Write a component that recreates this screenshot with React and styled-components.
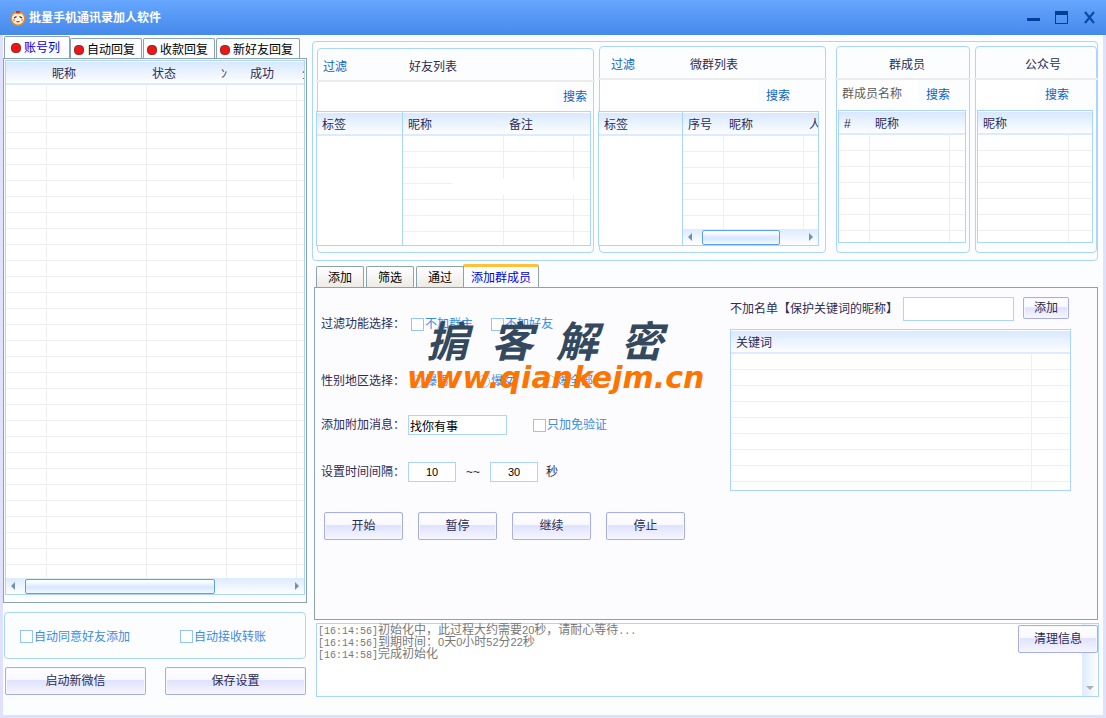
import React, { useState } from 'react';
import styled, { createGlobalStyle, css } from 'styled-components';

// Every grid in the app is drawn with the same table: header strip, 16px rows,
// and an optional fake scrollbar at the bottom.
function DataGrid({ columns, rows, bodyHeight, scroll, label }) {
  return (
    <GridBox>
      <GridClip $height={bodyHeight + 24}>
        <Table aria-label={label}>
          <colgroup>
            {columns.map((col, i) => (
              <col key={i} style={col.width ? { width: col.width } : undefined} />
            ))}
          </colgroup>
          <thead>
            <tr>
              {columns.map((col, i) => (
                <Th key={i} $align={col.align}>
                  {col.title}
                  {col.tail && <Tail>{col.tail}</Tail>}
                </Th>
              ))}
            </tr>
          </thead>
          <tbody>
            {Array.from({ length: rows }, (_, r) => (
              <tr key={r}>
                {columns.map((col, i) => (
                  <Td key={i} />
                ))}
              </tr>
            ))}
          </tbody>
        </Table>
      </GridClip>
      {scroll && (
        <ScrollTrack>
          <Arrow $dir="left" />
          <ScrollThumb $width={scroll} />
          <Arrow $dir="right" />
        </ScrollTrack>
      )}
    </GridBox>
  );
}

function Check({ type = 'checkbox', name, children }) {
  return (
    <CheckLabel>
      <CheckInput type={type} name={name} />
      {children}
    </CheckLabel>
  );
}

const accountColumns = [
  { title: '', width: 41 },
  { title: '昵称', width: 100 },
  { title: '状态', width: 80, tail: 'ﾝ' },
  { title: '成功', width: 70, align: 'center' },
  { title: '全' },
];

const accountTabs = ['账号列', '自动回复', '收款回复', '新好友回复'];
const taskTabs = ['添加', '筛选', '通过', '添加群成员'];
const taskButtons = ['开始', '暂停', '继续', '停止'];

function App() {
  const [accountTab, setAccountTab] = useState('账号列');
  const [taskTab, setTaskTab] = useState('添加群成员');

  return (
    <Window>
      <GlobalStyle />
      <TitleBar>
        <AppIcon viewBox="0 0 16 16" aria-hidden="true">
          <circle cx="8" cy="8.500" r="6.800" fill="#fff3df" stroke="#e88a1c" strokeWidth="1.500" />
          <path d="M4 3.500 Q8 -1.500 12 3.500 Q8 5 4 3.500Z" fill="#f39a1e" />
          <rect x="6" y="1" width="4" height="2" fill="#e0301c" />
          <path d="M4 8L6.500 6.500M12 8L9.500 6.500" stroke="#3b2a20" strokeWidth="1.200" />
          <circle cx="3.800" cy="10" r="1.200" fill="#f3a08c" />
          <circle cx="12.200" cy="10" r="1.200" fill="#f3a08c" />
          <path d="M6 11 Q8 14 10 11Z" fill="#e0301c" />
        </AppIcon>
        <h1>批量手机通讯录加人软件</h1>
        <WindowButtons>
          <button type="button" aria-label="最小化">
            <svg width="14" height="14"><rect x="0" y="7" width="13" height="3" fill="#003f98" /></svg>
          </button>
          <button type="button" aria-label="最大化">
            <svg width="14" height="14">
              <path d="M0 0H13V13H0Z M1 4V12H12V4Z" fillRule="evenodd" fill="#003f98" />
            </svg>
          </button>
          <button type="button" aria-label="关闭">
            <svg width="14" height="14">
              <path d="M2 1L11 12M11 1L2 12" stroke="#0b489f" strokeWidth="2" />
            </svg>
          </button>
        </WindowButtons>
      </TitleBar>

      <Body>
        <Sidebar>
          <AccountTabs role="tablist">
            {accountTabs.map((tab) => (
              <AccountTab
                key={tab}
                type="button"
                role="tab"
                aria-selected={tab === accountTab}
                $active={tab === accountTab}
                onClick={() => setAccountTab(tab)}
              >
                <RedDot />
                {tab}
              </AccountTab>
            ))}
          </AccountTabs>
          <AccountPanel>
            <DataGrid label="账号列" columns={accountColumns} rows={31} bodyHeight={493} scroll={190} />
          </AccountPanel>
          <AutoBox>
            <Check>自动同意好友添加</Check>
            <Check>自动接收转账</Check>
          </AutoBox>
          <SideButtons>
            <PushButton type="button">启动新微信</PushButton>
            <PushButton type="button">保存设置</PushButton>
          </SideButtons>
        </Sidebar>

        <Main>
          <Lists>
            <ListCard>
              <ListHead $pad={5}>
                <TextButton type="button">过滤</TextButton>
                <ListTitle $gap={62}>好友列表</ListTitle>
              </ListHead>
              <SearchRow $height={29} $right={6}>
                <input type="text" aria-label="搜索好友" />
                <TextButton type="button">搜索</TextButton>
              </SearchRow>
              <GridPair $left={87} $right={2}>
                <DataGrid label="好友标签" columns={[{ title: '标签' }]} rows={0} bodyHeight={109} />
                <DataGrid
                  label="好友列表"
                  columns={[{ title: '昵称', width: 101 }, { title: '备注', width: 70 }, { title: '' }]}
                  rows={7}
                  bodyHeight={109}
                />
                <BlankBand />
              </GridPair>
            </ListCard>

            <ListCard>
              <ListHead $pad={11}>
                <TextButton type="button">过滤</TextButton>
                <ListTitle $gap={55}>微群列表</ListTitle>
              </ListHead>
              <SearchRow $height={31} $right={35}>
                <input type="text" aria-label="搜索微群" />
                <TextButton type="button">搜索</TextButton>
              </SearchRow>
              <GridPair $left={85} $right={6}>
                <DataGrid label="微群标签" columns={[{ title: '标签' }]} rows={0} bodyHeight={109} />
                <DataGrid
                  label="微群列表"
                  columns={[{ title: '序号', width: 41 }, { title: '昵称', width: 80 }, { title: '人' }]}
                  rows={6}
                  bodyHeight={93}
                  scroll={78}
                />
              </GridPair>
            </ListCard>

            <ListCard $apart>
              <ListHead $pad={0}>
                <ListTitle $gap={52}>群成员</ListTitle>
              </ListHead>
              <SearchRow $height={30} $right={19}>
                <input type="text" placeholder="群成员名称" aria-label="群成员名称" />
                <TextButton type="button">搜索</TextButton>
              </SearchRow>
              <GridSingle>
                <DataGrid
                  label="群成员"
                  columns={[{ title: '#', width: 31 }, { title: '昵称', width: 80 }, { title: '' }]}
                  rows={7}
                  bodyHeight={107}
                />
              </GridSingle>
            </ListCard>

            <ListCard>
              <ListHead $pad={0}>
                <ListTitle $gap={49}>公众号</ListTitle>
              </ListHead>
              <SearchRow $height={30} $right={27}>
                <input type="text" aria-label="搜索公众号" />
                <TextButton type="button">搜索</TextButton>
              </SearchRow>
              <GridSingle>
                <DataGrid
                  label="公众号"
                  columns={[{ title: '昵称', width: 91 }, { title: '' }]}
                  rows={7}
                  bodyHeight={107}
                />
              </GridSingle>
            </ListCard>
          </Lists>

          <TaskTabs role="tablist">
            {taskTabs.map((tab) => (
              <TaskTab
                key={tab}
                type="button"
                role="tab"
                aria-selected={tab === taskTab}
                $active={tab === taskTab}
                onClick={() => setTaskTab(tab)}
              >
                {tab}
              </TaskTab>
            ))}
          </TaskTabs>
          <TaskPanel>
            <Form>
              <FormRow>
                <FormLabel>过滤功能选择：</FormLabel>
                <Options $gap={18}>
                  <Check>不加群主</Check>
                  <Check>不加好友</Check>
                </Options>
              </FormRow>
              <FormRow>
                <FormLabel>性别地区选择：</FormLabel>
                <Options $gap={28}>
                  <Check type="radio" name="sex">爆男</Check>
                  <Check type="radio" name="sex">爆女</Check>
                  <Check type="radio" name="sex">爆全部</Check>
                </Options>
              </FormRow>
              <FormRow>
                <FormLabel as="label" htmlFor="message">添加附加消息：</FormLabel>
                <Options $gap={26}>
                  <TextField id="message" type="text" defaultValue="找你有事" $width={99} />
                  <Check>只加免验证</Check>
                </Options>
              </FormRow>
              <FormRow>
                <FormLabel as="label" htmlFor="from">设置时间间隔：</FormLabel>
                <Options $gap={8}>
                  <TextField id="from" type="text" defaultValue="10" $width={48} $center />
                  <Tilde>~~</Tilde>
                  <TextField type="text" defaultValue="30" aria-label="最长间隔" $width={48} $center />
                  <span>秒</span>
                </Options>
              </FormRow>
              <ButtonRow>
                {taskButtons.map((text) => (
                  <PushButton key={text} type="button">{text}</PushButton>
                ))}
              </ButtonRow>
            </Form>

            <Blocklist>
              <BlockRow>
                <label htmlFor="keyword">不加名单【保护关键词的昵称】</label>
                <TextField id="keyword" type="text" $tall />
                <PushButton type="button" $small>添加</PushButton>
              </BlockRow>
              <DataGrid
                label="关键词"
                columns={[{ title: '关键词', width: 301 }, { title: '' }]}
                rows={9}
                bodyHeight={136}
              />
            </Blocklist>

            <Watermark>
              <WatermarkName>
                <span>掮</span>
                <span>客</span>
                <span>解</span>
                <span>密</span>
              </WatermarkName>
              <WatermarkSite>www.qiankejm.cn</WatermarkSite>
            </Watermark>
          </TaskPanel>

          <Log>
            <LogLines>
              <p><Mono>[16:14:56]</Mono>初始化中，此过程大约需要<Num>20</Num>秒，请耐心等待<Mono>...</Mono></p>
              <p><Mono>[16:14:56]</Mono>到期时间：<Num>0</Num>天<Num>0</Num>小时<Num>52</Num>分<Num>22</Num>秒</p>
              <p><Mono>[16:14:58]</Mono>完成初始化</p>
            </LogLines>
            <LogScroll>
              <Arrow $dir="down" />
            </LogScroll>
            <ClearButton type="button">清理信息</ClearButton>
          </Log>
        </Main>
      </Body>
    </Window>
  );
}

const GlobalStyle = createGlobalStyle`
  *{
    box-sizing: border-box;
  }
  body{
    margin: 0;
    background: #fcfdff;
  }
  body, button, input{
    font-family: "Liberation Sans", "Noto Sans CJK SC", sans-serif;
    font-size: 12px;
    line-height: 16px;
    color: #2c2c54;
  }
  h1, h2, p{
    margin: 0;
    font-size: 12px;
  }
`;

const Window = styled.div`
  display: flex;
  flex-direction: column;
  min-height: 100vh;
  background: #fcfdff;
`;

const TitleBar = styled.header`
  display: flex;
  align-items: center;
  height: 35px;
  padding: 0 9px 0 10px;
  background: linear-gradient(#66a6ff, #4589ea);
  h1{
    flex: 1;
    margin-left: 3px;
    color: #fff;
    font-weight: 700;
  }
`;

const AppIcon = styled.svg`
  width: 16px;
  height: 16px;
`;

const WindowButtons = styled.div`
  display: flex;
  gap: 14px;
  button{
    display: flex;
    padding: 0;
    border: 0;
    background: none;
  }
`;

const Body = styled.div`
  display: flex;
  flex: 1;
  gap: 5px;
  padding: 0 5px 18px 0;
  border: solid #e0e0ff;
  border-width: 0 3px 3px;
`;

const Sidebar = styled.aside`
  width: 304px;
  flex: none;
`;

const AccountTabs = styled.div`
  display: flex;
  align-items: flex-end;
  gap: 1px;
  height: 23px;
  padding: 1px 0 0 1px;
`;

const AccountTab = styled.button`
  display: flex;
  align-items: center;
  gap: 3px;
  height: 20px;
  padding: 2px 6px 0 3px;
  border: 1px solid #8ca2ae;
  border-bottom: 0;
  border-radius: 2px 2px 0 0;
  background: #fcfdff;
  color: #000;
  white-space: nowrap;
  ${({ $active }) => $active && css`
    height: 22px;
    padding: 0 9px 0 6px;
    color: #0000e6;
    margin-right: -1px;
  `}
`;

const RedDot = styled.span`
  width: 10px;
  height: 10px;
  border-radius: 4px;
  border: 1px solid #8e3030;
  background: #ee1515;
`;

const AccountPanel = styled.section`
  padding: 1px 1px 7px;
  border: 1px solid #8ca2ae;
`;

const GridBox = styled.div`
  min-width: 0;
  border: 1px solid #aad5ff;
  background: #fff;
`;

const GridClip = styled.div`
  height: ${({ $height }) => $height}px;
  overflow: hidden;
`;

const Table = styled.table`
  width: 100%;
  table-layout: fixed;
  border-collapse: separate;
  border-spacing: 0;
`;

const Th = styled.th`
  height: 24px;
  padding: ${({ $align }) => ($align ? '3px 0 0' : '3px 0 0 5px')};
  border-top: 1px solid #fff;
  border-bottom: 2px solid #dcebff;
  background: linear-gradient(#d8e8ff, #fdfeff);
  font-weight: 400;
  text-align: ${({ $align }) => $align || 'left'};
  white-space: nowrap;
  overflow: hidden;
`;

const Tail = styled.span`
  float: right;
`;

const Td = styled.td`
  height: 16px;
  padding: 0;
  border: solid #efefef;
  border-width: 0 1px 1px 0;
  &:last-child{
    border-right: 0;
  }
`;

const ScrollTrack = styled.div`
  display: flex;
  align-items: center;
  height: 16px;
  padding: 0 5px;
  background: linear-gradient(#dcebff, #fff);
`;

const ScrollThumb = styled.div`
  width: ${({ $width }) => $width}px;
  height: 15px;
  margin: 0 auto 0 10px;
  border: 1px solid #5ba0ee;
  border-radius: 2px;
  background: linear-gradient(#fff 10%, #d5e7ff 55%, #f4f9ff);
`;

const Arrow = styled.i`
  width: 0;
  height: 0;
  border: 4px solid transparent;
  ${({ $dir }) => $dir === 'left' && css`
    border-left: 0;
    border-right-color: #6c94b2;
  `}
  ${({ $dir }) => $dir === 'right' && css`
    border-right: 0;
    border-left-color: #6c94b2;
  `}
  ${({ $dir }) => $dir === 'down' && css`
    border-bottom: 0;
    border-top-color: #b0b0b0;
  `}
`;

const AutoBox = styled.div`
  display: flex;
  align-items: center;
  gap: 50px;
  height: 47px;
  margin: 9px 1px 0;
  padding: 2px 0 0 15px;
  border: 1px solid #aad5ff;
  border-radius: 4px;
`;

const CheckLabel = styled.label`
  display: inline-flex;
  align-items: center;
  gap: 1px;
  color: #3d8be4;
  white-space: nowrap;
`;

const CheckInput = styled.input`
  appearance: none;
  width: 13px;
  height: 13px;
  margin: 0;
  border: 1px solid #92c6f8;
  border-radius: ${({ type }) => (type === 'radio' ? '50%' : '0')};
  background: #fff;
`;

const PushButton = styled.button`
  width: ${({ $small }) => ($small ? '46px' : '79px')};
  height: ${({ $small }) => ($small ? '22px' : '28px')};
  padding: 0;
  border: 1px solid #a5aeea;
  border-radius: 2px;
  background: linear-gradient(#fff, #f8f8ff 46%, #e0e2ff 48%, #f6f6ff);
  box-shadow: inset 0 0 0 1px #f8f8fc;
`;

const SideButtons = styled.div`
  display: flex;
  gap: 19px;
  margin-top: 8px;
  padding: 0 1px 0 2px;
  ${PushButton}{
    flex: 1;
  }
`;

const Main = styled.main`
  display: flex;
  flex: 1;
  flex-direction: column;
  min-width: 0;
  padding-top: 6px;
`;

const Lists = styled.section`
  display: grid;
  grid-template-columns: 277fr 227fr 139fr 122fr;
  align-items: end;
  gap: 5px;
  padding: 4px 0 7px 4px;
  border: 1px solid #aad5ff;
  border-radius: 4px;
`;

const ListCard = styled.section`
  display: flex;
  flex-direction: column;
  min-width: 0;
  margin-left: ${({ $apart }) => ($apart ? '5px' : '0')};
  border: 1px solid #aad5ff;
  border-radius: 4px;
`;

const ListHead = styled.div`
  display: flex;
  align-items: center;
  height: 33px;
  margin: 0 -2px;
  padding: 5px 0 0 ${({ $pad }) => $pad + 2}px;
  border-bottom: 2px solid #ececec;
`;

const ListTitle = styled.h2`
  margin-left: ${({ $gap }) => $gap}px;
  font-weight: 400;
  white-space: nowrap;
`;

const TextButton = styled.button`
  flex: none;
  padding: 0;
  border: 0;
  background: none;
  color: #0a62c4;
`;

const SearchRow = styled.div`
  display: flex;
  gap: 8px;
  height: ${({ $height }) => $height}px;
  padding-right: ${({ $right }) => $right}px;
  input{
    flex: 1;
    min-width: 0;
    height: 28px;
    padding: 0 0 0 5px;
    border: 0;
    background: #fff;
    outline: none;
  }
  input::placeholder{
    color: #5c5c5c;
  }
`;

const GridPair = styled.div`
  position: relative;
  display: grid;
  grid-template-columns: ${({ $left }) => $left}px 1fr;
  margin: 0 ${({ $right }) => $right}px 6px -2px;
  > * + *{
    margin-left: -1px;
  }
`;

// White strip lying over the lines of the friend grid
const BlankBand = styled.i`
  position: absolute;
  top: 68px;
  left: 137px;
  right: 1px;
  height: 16px;
  background: #fff;
`;

const GridSingle = styled.div`
  margin: 0 3px 9px 1px;
`;

const TaskTabs = styled.div`
  display: flex;
  align-items: flex-end;
  gap: 2px;
  height: 26px;
  padding-left: 4px;
`;

const TaskTab = styled.button`
  height: 21px;
  padding: 1px 11px 0;
  border: 1px solid #8ca2ae;
  border-bottom: 0;
  border-radius: 2px 2px 0 0;
  background: linear-gradient(#fff, #ecebe4);
  color: #000;
  ${({ $active }) => $active && css`
    position: relative;
    height: 24px;
    margin: 0 0 -1px -3px;
    padding: 0 7px;
    border-top: 3px solid #ffc03a;
    background: #fcfdff;
    color: #0000e6;
  `}
`;

const TaskPanel = styled.section`
  position: relative;
  display: flex;
  flex: 1;
  justify-content: space-between;
  margin-left: 2px;
  padding: 0 26px 0 6px;
  border: 1px solid #8ca2ae;
  background: #fcfcff;
`;

const Form = styled.form`
  display: grid;
  grid-template-rows: 72px 42px 46px 48px 60px;
  align-content: start;
`;

const FormRow = styled.div`
  display: flex;
  align-items: center;
`;

const FormLabel = styled.span`
  width: 87px;
  white-space: nowrap;
`;

const Options = styled.div`
  display: flex;
  align-items: center;
  gap: ${({ $gap }) => $gap}px;
  ${CheckLabel}:first-child{
    margin-left: 3px;
  }
`;

const TextField = styled.input`
  width: ${({ $width }) => ($width ? `${$width}px` : 'auto')};
  height: ${({ $tall }) => ($tall ? '24px' : '20px')};
  padding: 0 1px;
  border: 1px solid #aad5ff;
  background: #fff;
  color: #000;
  font-size: ${({ $center }) => ($center ? '11px' : '12px')};
  text-align: ${({ $center }) => ($center ? 'center' : 'left')};
  outline: none;
`;

const Tilde = styled.span`
  width: 18px;
  text-align: center;
`;

const ButtonRow = styled.div`
  display: flex;
  align-items: center;
  gap: 15px;
  padding-left: 3px;
`;

const Blocklist = styled.div`
  width: 341px;
  padding-top: 9px;
`;

const BlockRow = styled.div`
  display: flex;
  gap: 9px;
  height: 32px;
  padding-right: 2px;
  label{
    margin-right: -4px;
    line-height: 24px;
    white-space: nowrap;
  }
  input{
    flex: 1;
    min-width: 0;
  }
`;

// Site stamp printed over the form
const Watermark = styled.div`
  position: absolute;
  left: 92px;
  top: 32px;
  pointer-events: none;
  font-style: italic;
  font-weight: 700;
`;

const WatermarkName = styled.div`
  display: flex;
  gap: 23px;
  padding-left: 19px;
  color: #34495e;
  font-size: 42px;
  line-height: 46px;
`;

const WatermarkSite = styled.div`
  color: #ff7400;
  font-family: "DejaVu Sans", sans-serif;
  font-size: 30px;
  line-height: 24px;
`;

const Log = styled.section`
  position: relative;
  display: flex;
  height: 74px;
  margin: 3px -1px 0 4px;
  border: 1px solid #aad5ff;
  background: #fff;
`;

const LogLines = styled.div`
  flex: 1;
  padding-left: 1px;
  color: #787878;
  p{
    height: 12px;
    line-height: 12px;
  }
`;

const Mono = styled.span`
  font-family: "Liberation Mono", monospace;
  font-size: 10px;
`;

const Num = styled.span`
  font-size: 11px;
`;

const LogScroll = styled.div`
  display: flex;
  align-items: flex-end;
  justify-content: center;
  width: 16px;
  padding-bottom: 6px;
  background: linear-gradient(90deg, #dcebff, #fff);
`;

const ClearButton = styled(PushButton)`
  position: absolute;
  top: 1px;
  right: 0;
  width: 80px;
`;

export default App;
